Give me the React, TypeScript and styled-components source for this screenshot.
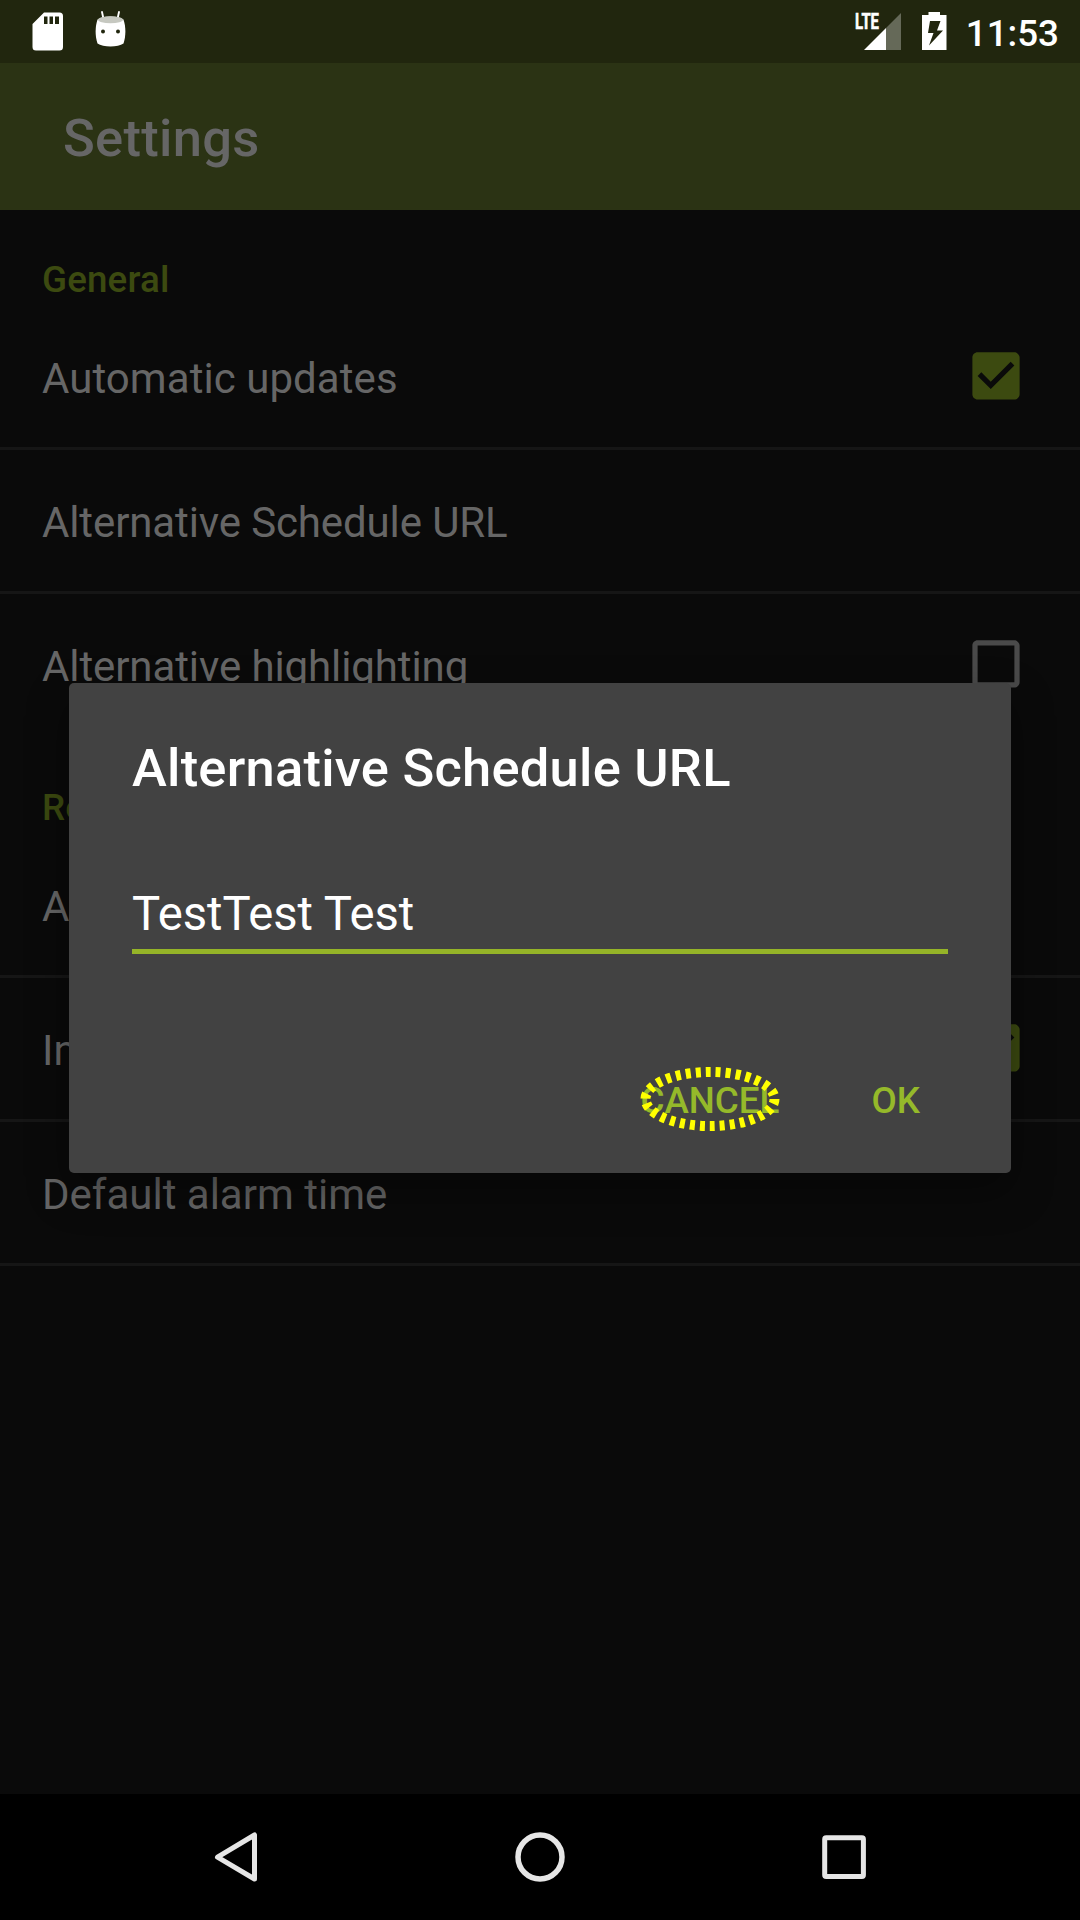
import React from "react";
import styled, { createGlobalStyle } from "styled-components";

const GlobalStyle = createGlobalStyle`
  html, body { margin: 0; padding: 0; background: #000; }
  * { box-sizing: border-box; }
`;

const Screen = styled.div`
  position: relative;
  display: flex;
  flex-direction: column;
  width: 1080px;
  height: 1920px;
  overflow: hidden;
  background: #0a0a0a;
  font-family: Roboto, "Liberation Sans", sans-serif;
`;

const StatusBar = styled.header`
  display: flex;
  flex: none;
  justify-content: space-between;
  height: 63px;
  padding: 0 21px 0 32px;
  background: #21260e;
`;

const StatusGroup = styled.div<{ $gap: number }>`
  display: flex;
  align-items: flex-start;
  gap: ${(p) => p.$gap}px;
`;

const StatusIcon = styled.svg<{ $top: number }>`
  display: block;
  margin-top: ${(p) => p.$top}px;
`;

const Clock = styled.time`
  margin-left: -1px;
  padding-top: 12px;
  font-size: 36.75px;
  font-weight: 500;
  line-height: 44px;
  color: #fff;
`;

const Toolbar = styled.div`
  display: flex;
  flex: none;
  align-items: center;
  height: 147px;
  padding: 3px 63px 0;
  background: #2b3314;
`;

const ToolbarTitle = styled.h1`
  margin: 0;
  font-size: 52.5px;
  font-weight: 500;
  line-height: 62px;
  letter-spacing: 0.28px;
  color: #666;
`;

const SettingsList = styled.main`
  flex: 1;
  padding: 0 42px;
`;

const Category = styled.h2`
  display: flex;
  align-items: flex-end;
  height: 96px;
  margin: 0;
  padding-bottom: 4px;
  font-size: 36.75px;
  font-weight: 500;
  line-height: 44px;
  letter-spacing: 0.15px;
  color: #3c4a10;
`;

const Row = styled.div<{ $last?: boolean }>`
  display: flex;
  align-items: center;
  justify-content: space-between;
  height: 144px;
  margin: 0 -42px;
  padding: 0 53px 0 42px;
  border-bottom: 3px solid ${(p) => (p.$last ? "transparent" : "#161616")};
`;

const RowLabel = styled.span<{ $tracking: number }>`
  padding-top: 4px;
  font-size: 42px;
  line-height: 50px;
  letter-spacing: ${(p) => p.$tracking}px;
  color: #666;
`;

const CheckIcon = styled.svg<{ $on: boolean }>`
  display: block;
  width: 63px;
  height: 63px;
  margin-top: -2px;
  fill: ${(p) => (p.$on ? "#3c4a10" : "#4a4a4a")};
`;

const NavBar = styled.nav`
  display: flex;
  flex: none;
  align-items: center;
  justify-content: space-between;
  height: 126px;
  padding: 0 207px;
  background: #000;
`;

const NavIcon = styled.svg`
  display: block;
  fill: none;
  stroke: #e6e6e6;
`;

const Dialog = styled.section`
  position: absolute;
  left: 69px;
  top: 683px;
  display: flex;
  flex-direction: column;
  width: 942px;
  height: 490px;
  padding: 54px 63px 0;
  border-radius: 5px;
  background: #424242;
  box-shadow: 0 18px 42px rgba(0, 0, 0, 0.38);
`;

const DialogTitle = styled.h2`
  margin: 0;
  font-size: 52.5px;
  font-weight: 500;
  line-height: 62px;
  letter-spacing: 0.23px;
  color: #fff;
`;

const UrlField = styled.div`
  height: 68px;
  margin-top: 87px;
  border-bottom: 5px solid #95b428;
  font-size: 47.25px;
  line-height: 56px;
  letter-spacing: -0.08px;
  color: #fff;
`;

const DialogActions = styled.div`
  display: flex;
  justify-content: flex-end;
  gap: 92px;
  margin-top: 125px;
  padding-right: 28px;
`;

const ActionButton = styled.button`
  position: relative;
  padding: 0;
  border: 0;
  background: none;
  font: 500 36.75px/44px Roboto, "Liberation Sans", sans-serif;
  color: #95b92a;
`;

const TapMarker = styled.svg`
  position: absolute;
  left: -2px;
  top: -14px;
  fill: none;
  stroke: #ff0;
  stroke-width: 10;
  stroke-dasharray: 5 5;
`;

const CHECKED =
  "M19 3H5c-1.11 0-2 .9-2 2v14c0 1.1.89 2 2 2h14c1.11 0 2-.9 2-2V5c0-1.1-.89-2-2-2zm-9 14l-5-5 1.41-1.41L10 14.17l7.59-7.59L19 8l-9 9z";
const UNCHECKED =
  "M19 5v14H5V5h14m0-2H5c-1.1 0-2 .9-2 2v14c0 1.1.9 2 2 2h14c1.1 0 2-.9 2-2V5c0-1.1-.9-2-2-2z";

interface Preference {
  label: string;
  tracking?: number;
  checked?: boolean;
}

const sections: { title: string; items: Preference[] }[] = [
  {
    title: "General",
    items: [
      { label: "Automatic updates", tracking: 0.06, checked: true },
      { label: "Alternative Schedule URL", tracking: -0.12 },
      { label: "Alternative highlighting", tracking: -0.1, checked: false },
    ],
  },
  {
    title: "Reminders",
    items: [
      { label: "Alarm tone" },
      { label: "Insistent alarms", checked: true },
      { label: "Default alarm time" },
    ],
  },
];

export default function App() {
  return (
    <>
      <GlobalStyle />
      <Screen>
        <StatusBar>
          <StatusGroup $gap={32}>
            <StatusIcon $top={12} width="31" height="39" viewBox="0 0 31 39">
              <path
                fill="#fff"
                fillRule="evenodd"
                d="M12 .5H27.500a3.500 3.500 0 0 1 3.500 3.500V35a3.500 3.500 0 0 1-3.500 3.500H4A3.500 3.500 0 0 1 .5 35V12ZM12 4.500V12h3.500V4.500ZM17.500 4.500V12h3.500V4.500ZM23 4.500V12h4V4.500Z"
              />
            </StatusIcon>
            <StatusIcon $top={10} width="31" height="38" viewBox="0 0 31 38">
              <path d="M7 2l1.500 7M24 2l-1.500 7" stroke="#fff" strokeWidth="1.900" strokeLinecap="round" />
              <path
                fill="#fff"
                d="M2.500 9.500C8 5.500 23 5.500 28.500 9.500C31 17 31 26 28.500 33.500C23 37.500 8 37.500 2.500 33.500C0 26 0 17 2.500 9.500Z"
              />
              <ellipse cx="15.500" cy="9.700" rx="12.500" ry="3.500" fill="#c6c8c0" />
              <circle cx="8" cy="21.500" r="2" fill="#21260e" />
              <circle cx="23" cy="21.500" r="2" fill="#21260e" />
            </StatusIcon>
          </StatusGroup>
          <StatusGroup $gap={19}>
            <StatusIcon $top={4} width="47" height="46" viewBox="0 -8 47 46">
              <path fill="#656958" d="M46 1V38H31V16Z" />
              <path fill="#fff" d="M31 16V38H9Z" />
              <text
                x="0"
                y="17"
                fill="#fff"
                stroke="#fff"
                strokeWidth="0.600"
                fontFamily="Roboto, sans-serif"
                fontSize="22"
                fontWeight="700"
                textLength="24"
                lengthAdjust="spacingAndGlyphs"
              >
                LTE
              </text>
            </StatusIcon>
            <StatusIcon $top={12} width="27" height="38" viewBox="0 0 27 38">
              <path
                fill="#fff"
                fillRule="evenodd"
                d="M7.500 0h11.500v3H25.500V38H1V3h6.500ZM9 9L7 21h5.500L8 33.500L22 18.500h-6L19.500 9Z"
              />
            </StatusIcon>
            <Clock>11:53</Clock>
          </StatusGroup>
        </StatusBar>
        <Toolbar>
          <ToolbarTitle>Settings</ToolbarTitle>
        </Toolbar>
        <SettingsList>
          {sections.map((section, s) => (
            <React.Fragment key={section.title}>
              <Category>{section.title}</Category>
              {section.items.map((item, i) => (
                <Row key={item.label} $last={s === 0 && i === section.items.length - 1}>
                  <RowLabel $tracking={item.tracking ?? 0}>{item.label}</RowLabel>
                  {item.checked !== undefined && (
                    <CheckIcon $on={item.checked} viewBox="-0.19 -0.19 24 24">
                      <path d={item.checked ? CHECKED : UNCHECKED} />
                    </CheckIcon>
                  )}
                </Row>
              ))}
            </React.Fragment>
          ))}
        </SettingsList>
        <NavBar>
          <NavIcon width="58" height="58" viewBox="0 0 58 58">
            <path d="M10.500 29.200L47.500 7V51Z" strokeWidth="5" strokeLinejoin="round" />
          </NavIcon>
          <NavIcon width="58" height="58" viewBox="0 0 58 58">
            <circle cx="29" cy="29" r="22" strokeWidth="5.500" />
          </NavIcon>
          <NavIcon width="58" height="58" viewBox="0 0 58 58">
            <rect x="9.700" y="9.700" width="38.700" height="38.700" rx="1.500" strokeWidth="5" />
          </NavIcon>
        </NavBar>
        <Dialog role="dialog">
          <DialogTitle>Alternative Schedule URL</DialogTitle>
          <UrlField>TestTest Test</UrlField>
          <DialogActions>
            <ActionButton>
              CANCEL
              <TapMarker width="144" height="68" viewBox="0 0 144 68">
                <ellipse cx="72" cy="34" rx="64.500" ry="27" />
              </TapMarker>
            </ActionButton>
            <ActionButton>OK</ActionButton>
          </DialogActions>
        </Dialog>
      </Screen>
    </>
  );
}
